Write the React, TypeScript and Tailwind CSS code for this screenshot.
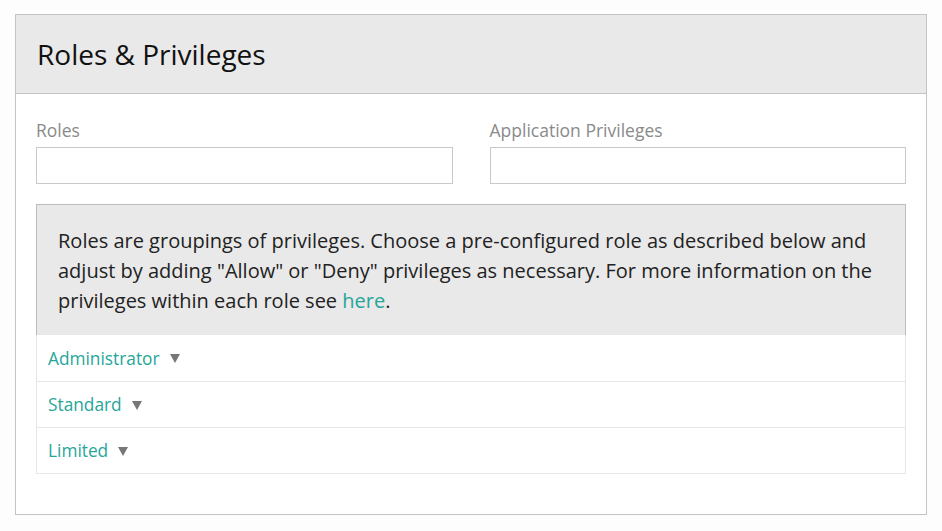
const roles = ['Administrator', 'Standard', 'Limited']

function Caret() {
  return (
    <svg width="10" height="9" viewBox="0 0 10 9" className="ml-[10px] shrink-0">
      <path d="M0 0 L10 0 L5 9 Z" fill="#777777" />
    </svg>
  )
}

export default function App() {
  return (
    <div
      className="min-h-screen bg-[#fdfdfd] pl-[15px] pt-[14px] pr-[15px] pb-[16px]"
      style={{ fontFamily: '"Open Sans", "Noto Sans", sans-serif' }}
    >
      <div className="w-[912px] border border-[#c4c4c4] bg-white">
        <div className="h-[79px] bg-[#e9e9e9] border-b border-[#c4c4c4] flex items-center px-[21px]">
          <h1 className="text-[28px] text-[#111] leading-none pb-[1px]">Roles &amp; Privileges</h1>
        </div>

        <div className="px-[20px] pt-[24px] pb-[40px]">
          <div className="grid grid-cols-2 gap-x-[37px]">
            <div>
              <label className="block text-[17.5px] leading-[24px] text-[#8a8a8a] mb-[5px]">Roles</label>
              <div className="h-[37px] border border-[#c9c9c9] bg-white" />
            </div>
            <div>
              <label className="block text-[17.5px] leading-[24px] text-[#8a8a8a] mb-[5px]">Application Privileges</label>
              <div className="h-[37px] border border-[#c9c9c9] bg-white" />
            </div>
          </div>

          <div className="mt-[20px] bg-[#e9e9e9] border-t border-l border-r border-[#bdbdbd] px-[21px] pt-[21px] pb-[19px]">
            <p className="text-[20px] leading-[30px] text-[#222]">
              Roles are groupings of privileges. Choose a pre-configured role as described below and adjust by adding "Allow" or "Deny" privileges as necessary. For more information on the privileges within each role see{' '}
              <a href="#" className="text-[#26a69a]">here</a>.
            </p>
          </div>

          <div className="border border-t-0 border-[#e6e6e6]">
            {roles.map((r, i) => (
              <div
                key={r}
                className={`h-[46px] flex items-center px-[11px] pt-[1px] ${i > 0 ? 'border-t border-[#e6e6e6]' : ''}`}
              >
                <span className="text-[17.3px] text-[#26a69a]">{r}</span>
                <Caret />
              </div>
            ))}
          </div>
        </div>
      </div>
    </div>
  )
}
